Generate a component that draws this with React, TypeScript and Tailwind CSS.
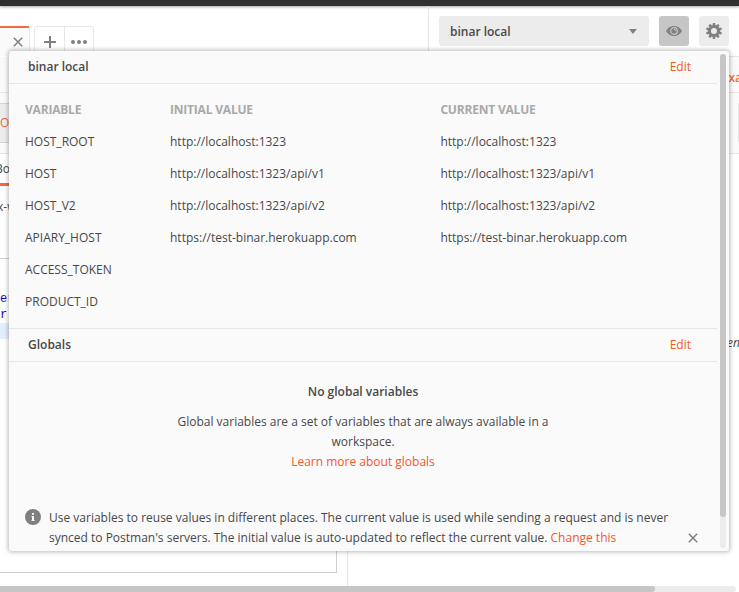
import React from "react";

const variables: { name: string; value: string }[] = [
  { name: "HOST_ROOT", value: "http://localhost:1323" },
  { name: "HOST", value: "http://localhost:1323/api/v1" },
  { name: "HOST_V2", value: "http://localhost:1323/api/v2" },
  { name: "APIARY_HOST", value: "https://test-binar.herokuapp.com" },
  { name: "ACCESS_TOKEN", value: "" },
  { name: "PRODUCT_ID", value: "" },
];

function CloseIcon({ className }: { className: string }) {
  return (
    <svg viewBox="0 0 10 10" className={className} fill="none" stroke="#808080" strokeWidth="1.5">
      <path d="M0.8 0.8 9.2 9.2M9.2 0.8 0.8 9.2" />
    </svg>
  );
}

function GearIcon() {
  return (
    <svg viewBox="-8 -8 16 16" className="h-4 w-4" fill="#808080">
      {[0, 36, 72, 108, 144, 180, 216, 252, 288, 324].map((a) => (
        <path key={a} d="M-1.5 -5 -1.1 -8H1.1L1.5 -5Z" transform={`rotate(${a})`} />
      ))}
      <circle r="4.5" fill="none" stroke="#808080" strokeWidth="3" />
    </svg>
  );
}

function EyeIcon() {
  return (
    <svg viewBox="0 0 16 10" className="h-2.5 w-4">
      <path d="M0 5C2 1.8 4.8 0 8 0s6 1.8 8 5c-2 3.2-4.8 5-8 5S2 8.2 0 5Z" fill="#808080" />
      <circle cx="8" cy="5" r="3.3" fill="none" stroke="#c6c6c6" strokeWidth="1.2" />
      <path d="M8 3.4A1.6 1.6 0 0 1 9.6 5" fill="none" stroke="#c6c6c6" strokeWidth="1" />
    </svg>
  );
}

function Header() {
  return (
    <header className="flex h-[51px] shrink-0">
      <div className="flex w-[429px] shrink-0 items-end border-r border-[#e6e6e6] pb-px">
        <div className="flex h-[30px] w-[30px] items-start justify-end rounded-tr-[2px] border-t-2 border-r border-t-[#f26b3a] border-r-[#e6e6e6] bg-[#fafafa] pt-[9px] pr-[6px]">
          <CloseIcon className="h-[10px] w-[10px]" />
        </div>
        <div className="ml-1 flex h-[30px] w-[60px] rounded-t-[3px] border border-[#e6e6e6]">
          <div className="flex w-[30px] justify-center border-r border-[#e6e6e6] pt-[9px]">
            <svg viewBox="0 0 12 12" className="h-3 w-3" stroke="#808080" strokeWidth="2">
              <path d="M6 0V12M0 6H12" />
            </svg>
          </div>
          <div className="flex flex-1 justify-center pt-[13px]">
            <svg viewBox="0 0 16 4" className="h-1 w-4" fill="#808080">
              <circle cx="2" cy="2" r="2" />
              <circle cx="8" cy="2" r="2" />
              <circle cx="14" cy="2" r="2" />
            </svg>
          </div>
        </div>
      </div>
      <div className="flex flex-1 items-start gap-[10px] border-b border-[#e6e6e6] pt-[10px] pl-[10px]">
        <div className="flex h-[30px] w-[210px] items-center justify-between rounded-[3px] bg-[#ececec] pr-3 pl-[11px] font-semibold">
          <span className="pt-[2px]">binar local</span>
          <svg viewBox="0 0 8 5" className="h-[5px] w-2" fill="#808080">
            <path d="M0 0H8L4 5Z" />
          </svg>
        </div>
        <div className="flex h-[30px] w-[30px] items-center justify-center rounded-[3px] bg-[#c6c6c6]">
          <EyeIcon />
        </div>
        <div className="flex h-[30px] w-[30px] items-center justify-center rounded-[3px] bg-[#ececec]">
          <GearIcon />
        </div>
      </div>
    </header>
  );
}

function Workspace() {
  return (
    <>
      <div className="flex h-[36px] shrink-0 items-center justify-end overflow-hidden border-b border-[#e6e6e6] bg-[#fafafa]">
        <span className="-mr-[38px] pt-[7px] font-semibold text-[#f26b3a]">Examples</span>
      </div>
      <div className="flex h-[61px] shrink-0 justify-between border-b border-[#e6e6e6] bg-[#fafafa] pt-[10px]">
        <div className="flex h-10 w-10 items-center border-y border-[#d4d4d4] bg-[#ececec] text-[#f26b3a]">
          OST
        </div>
        <div className="h-[39px] w-px bg-[#e6e6e6]" />
      </div>
      <div className="flex min-h-0 flex-1">
        <section className="flex w-[348px] shrink-0 flex-col overflow-hidden border-r border-[#e6e6e6]">
          <div className="flex h-8 w-10 shrink-0 items-center border-b-[3px] border-[#f26b3a]">
            <span className="-ml-[5px]">Body</span>
          </div>
          <div className="h-[72px] shrink-0 pt-[13px] whitespace-nowrap">
            <span className="-ml-[3px]">x-www</span>
          </div>
          <div className="h-[315px] w-[337px] shrink-0 border-t border-r border-b border-[#d0d0d0] pt-8 font-['Liberation_Mono',monospace] text-[12px] leading-4 text-[#1a00e0]">
            <div>er</div>
            <div>r:</div>
            <div className="h-4 bg-[#e2eefb]" />
          </div>
        </section>
        <section className="flex flex-1 justify-end overflow-hidden pt-[181px]">
          <span className="-mr-px italic">en</span>
        </section>
      </div>
      <div className="h-[6px] w-[736px] shrink-0 rounded-r-[3px] bg-[#ececec]">
        <div className="h-full w-[655px] rounded-r-[3px] bg-[#c6c6c6]" />
      </div>
    </>
  );
}

function SectionTitle({ title }: { title: string }) {
  return (
    <div className="flex h-[33px] items-center justify-between border-b border-[#e6e6e6] pr-[26px] pl-[19px]">
      <h2 className="font-semibold">{title}</h2>
      <a className="text-[#f2582a]">Edit</a>
    </div>
  );
}

function EnvironmentPopover() {
  return (
    <div className="absolute top-[51px] left-[9px] flex h-[500px] w-[720px] rounded-[3px] bg-[#fafafa] shadow-[0_0_4px_1px_rgba(0,0,0,0.28)]">
      <div className="flex w-[708px] flex-col">
        <SectionTitle title="binar local" />
        <div className="h-[245px] border-b border-[#e6e6e6] pt-[10px] pl-4">
          <div className="grid h-8 grid-cols-[145px_270.4px_1fr] items-center font-bold tracking-[-0.2px] text-[#a9a9a9]">
            <span>VARIABLE</span>
            <span>INITIAL VALUE</span>
            <span>CURRENT VALUE</span>
          </div>
          {variables.map((v) => (
            <div key={v.name} className="grid h-8 grid-cols-[145px_270.4px_1fr] items-center">
              <span>{v.name}</span>
              <span>{v.value}</span>
              <span>{v.value}</span>
            </div>
          ))}
        </div>
        <SectionTitle title="Globals" />
        <div className="pt-5 text-center leading-5">
          <h3 className="font-semibold">No global variables</h3>
          <p className="mx-auto mt-[10px] w-[400px]">
            Global variables are a set of variables that are always available in a<br />
            workspace.
          </p>
          <a className="text-[#f2582a]">Learn more about globals</a>
        </div>
        <div className="mt-auto flex pb-[3px] pl-4 leading-5">
          <svg viewBox="0 0 16 16" className="mt-px h-4 w-4 shrink-0">
            <circle cx="8" cy="8" r="8" fill="#808080" />
            <path d="M7 4h2v1.8H7zM6.5 7H9v4h.6v1H6.5v-1H7V8h-.5z" fill="#fafafa" />
          </svg>
          <p className="ml-2 w-[639px] shrink-0 whitespace-nowrap">
            Use variables to reuse values in different places. The current value is used while sending a request and is never
            <br />
            synced to Postman&apos;s servers. The initial value is auto-updated to reflect the current value.{" "}
            <a className="text-[#f2582a]">Change this</a>
          </p>
          <CloseIcon className="mt-[25px] h-[10px] w-[10px] shrink-0" />
        </div>
      </div>
      <div className="mt-[3px] ml-[3px] h-[494px] w-[6px] rounded-full bg-[#ececec]">
        <div className="h-[463px] rounded-full bg-[#c6c6c6]" />
      </div>
    </div>
  );
}

export default function App() {
  return (
    <div className="relative flex h-[592px] w-[739px] flex-col overflow-hidden bg-white font-['Open_Sans',sans-serif] text-[12px] leading-4 text-[#484848]">
      <div className="h-[6px] shrink-0 bg-[#303030] shadow-[0_1px_3px_rgba(0,0,0,0.35)]" />
      <Header />
      <Workspace />
      <EnvironmentPopover />
    </div>
  );
}
